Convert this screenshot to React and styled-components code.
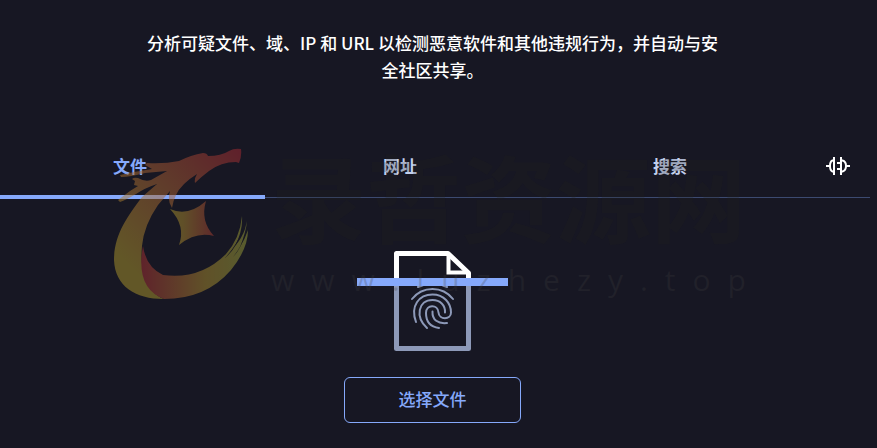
import React, { useState } from 'react'
import styled, { createGlobalStyle } from 'styled-components'

const tabs = ['文件', '网址', '搜索']

export default function App() {
    const [active, setActive] = useState(0)

    return (
        <>
            <GlobalStyle />
            <Page>
                <Intro>分析可疑文件、域、IP 和 URL 以检测恶意软件和其他违规行为，并自动与安全社区共享。</Intro>
                <TabList role="tablist">
                    {tabs.map((name, i) => (
                        <Tab key={name} role="tab" aria-selected={i === active} $active={i === active} onClick={() => setActive(i)}>
                            {name}
                        </Tab>
                    ))}
                    <PlugButton aria-label="API">
                        <PlugIcon />
                    </PlugButton>
                </TabList>
                <Upload>
                    <FileIcon />
                    <Choose>选择文件</Choose>
                </Upload>
            </Page>
            <Watermark aria-hidden="true">
                <DragonLogo />
                <Brand>
                    <BrandName>录哲资源网</BrandName>
                    <BrandUrl>www.luzhezy.top</BrandUrl>
                </Brand>
            </Watermark>
        </>
    )
}

function PlugIcon() {
    return (
        <svg width="26" height="20" viewBox="0 0 26 20" fill="none" stroke="#fff" strokeWidth="2">
            <path d="M1 10h4M9 1v18M9 4.500H7.500Q5 5.500 5 10t2.500 5.500H9" />
            <path d="M16 1v18M16 4.500h1.500Q21 5.500 21 10t-3.500 5.500H16M21 10h4M12 7h4M12 13h4" />
        </svg>
    )
}

function FileIcon() {
    return (
        <svg width="151" height="101" viewBox="0 0 151 101" fill="none">
            <path d="M39.500 28V2.500H91L111.500 22V28" stroke="#fff" strokeWidth="5" strokeLinejoin="round" />
            <path d="M91.500 3V21.500H111" stroke="#fff" strokeWidth="4" />
            <path d="M39.500 34V97.500H111.500V34" stroke="#8d99b8" strokeWidth="5" strokeLinejoin="round" />
            <g stroke="#8d99b8" strokeWidth="2" strokeLinecap="round">
                <path d="M61 36Q76 29 90 36" />
                <path d="M55 48Q63 38 75.500 38T96 48" />
                <path d="M59 71C53 55 62 43.500 75.500 43.500 87 43.500 94 52 94 61.500 94 69 82 69 81.500 61.500 81 53 69 53 69 62 69 71 74 76 82 77" />
                <path d="M70 77C58 66 61 49 75.500 49 83 49 88.500 54 88 61.500" />
                <path d="M75.500 60.500C75 69 81 73 90 72" />
            </g>
            <path d="M0 27h151v8H0z" fill="#86a9fb" />
        </svg>
    )
}

function DragonLogo() {
    return (
        <svg width="136" height="152" viewBox="0 0 136 152">
            <defs>
                <linearGradient id="body" x1="125" y1="0" x2="10" y2="110" gradientUnits="userSpaceOnUse">
                    <stop offset="0" stopColor="#a62a33" />
                    <stop offset=".5" stopColor="#a86334" />
                    <stop offset="1" stopColor="#ad972c" />
                </linearGradient>
                <linearGradient id="tail">
                    <stop offset="0" stopColor="#a62f33" />
                    <stop offset=".6" stopColor="#a98c2e" />
                    <stop offset="1" stopColor="#98a03a" />
                </linearGradient>
                <linearGradient id="star">
                    <stop offset="0" stopColor="#a9952e" />
                    <stop offset=".3" stopColor="#a9882e" />
                    <stop offset="1" stopColor="#a63a33" />
                </linearGradient>
            </defs>
            <path d="M128 1Q129 8 126 15L123 14Q108 14 96 23 88 29 82 35 81 31 84 26 68 36 63 47 60 53 59 60 54 53 57 43L45 57Q31 77 29 98C27 122 32 143 51 151 22 151 2 138 1 112 1 87 14 69 29 49L44 36Q32 40 23 46 13 52 7 54L5 52 17 43 25 38 21 37 22 33 19 31Q21 29 25 30 32 34 38 32L54 23 32 25Q17 29 8 29L7 27 21 24 39 21 32 17 34 15Q51 16 66 13 78 7 90 5 94 5 95 8 108 8 116 3 121 0 128 1z" fill="url(#body)" />
            <path d="M30 98Q33 119 50 127 87 132 113 106 127 90 129 68 130 83 122 98 129 90 132 81L134 73Q133 84 127 99 132 91 135 82 135 101 118 122 93 151 51 151 22 140 30 98z" fill="url(#tail)" />
            <path d="M112 110Q124 97 130 81 124 100 112 110zM120 109Q129 98 131 88 128 101 120 109z" fill="#171723" />
            <path d="M57 61Q75 69 93 53 87 73 101 88 83 83 66 97 73 78 57 61z" fill="url(#star)" />
        </svg>
    )
}

const GlobalStyle = createGlobalStyle`
    * {
        box-sizing: border-box;
    }
    body {
        margin: 0;
        background: #171723;
        overflow-x: hidden;
        color: #fff;
        font-family: 'Noto Sans CJK SC', sans-serif;
        font-size: 17px;
    }
    button {
        padding: 0;
        border: 0;
        background: none;
        font: inherit;
        cursor: pointer;
    }
`
const Page = styled.main`
    margin: 0 7px 0 -5px;
    padding: 29px 0 24px;
`
const Intro = styled.p`
    max-width: 580px;
    margin: 0 auto;
    font-weight: 500;
    line-height: 27px;
    text-align: center;
`
const TabList = styled.div`
    display: grid;
    grid-template-columns: 1fr 1fr 1fr 65px;
    margin-top: 53px;
    border-bottom: 1px solid #3c4a70;
`
const Tab = styled.button`
    height: 63px;
    margin-bottom: -2px;
    border-bottom: 4px solid ${p => p.$active ? '#86a9fb' : 'transparent'};
    color: ${p => p.$active ? '#86a9fb' : '#c3cfec'};
    font-weight: 700;
`
const PlugButton = styled.button`
    display: flex;
    align-items: center;
    justify-content: center;
    padding-bottom: 2px;
`
const Upload = styled.section`
    display: flex;
    flex-direction: column;
    align-items: center;
    gap: 25px;
    padding-top: 53px;
`
const Choose = styled.button`
    width: 177px;
    height: 46px;
    padding-bottom: 4px;
    border: 1px solid #86a9fb;
    border-radius: 6px;
    color: #86a9fb;
    font-weight: 500;
`
/* sits over the whole page */
const Watermark = styled.div`
    position: absolute;
    top: 148px;
    left: 113px;
    display: flex;
    gap: 22px;
    pointer-events: none;
    svg {
        opacity: .5;
        overflow: visible;
    }
`
const Brand = styled.div`
    color: rgba(38, 38, 28, .22);
`
const BrandName = styled.div`
    font-family: 'Liberation Serif', 'Noto Sans CJK SC', serif;
    font-size: 95px;
    font-weight: 700;
    line-height: 112px;
    white-space: nowrap;
`
const BrandUrl = styled.div`
    color: rgba(64, 64, 64, .25);
    font-family: 'Open Sans', sans-serif;
    font-size: 30px;
    line-height: 40px;
    letter-spacing: 17px;
    white-space: nowrap;
`
